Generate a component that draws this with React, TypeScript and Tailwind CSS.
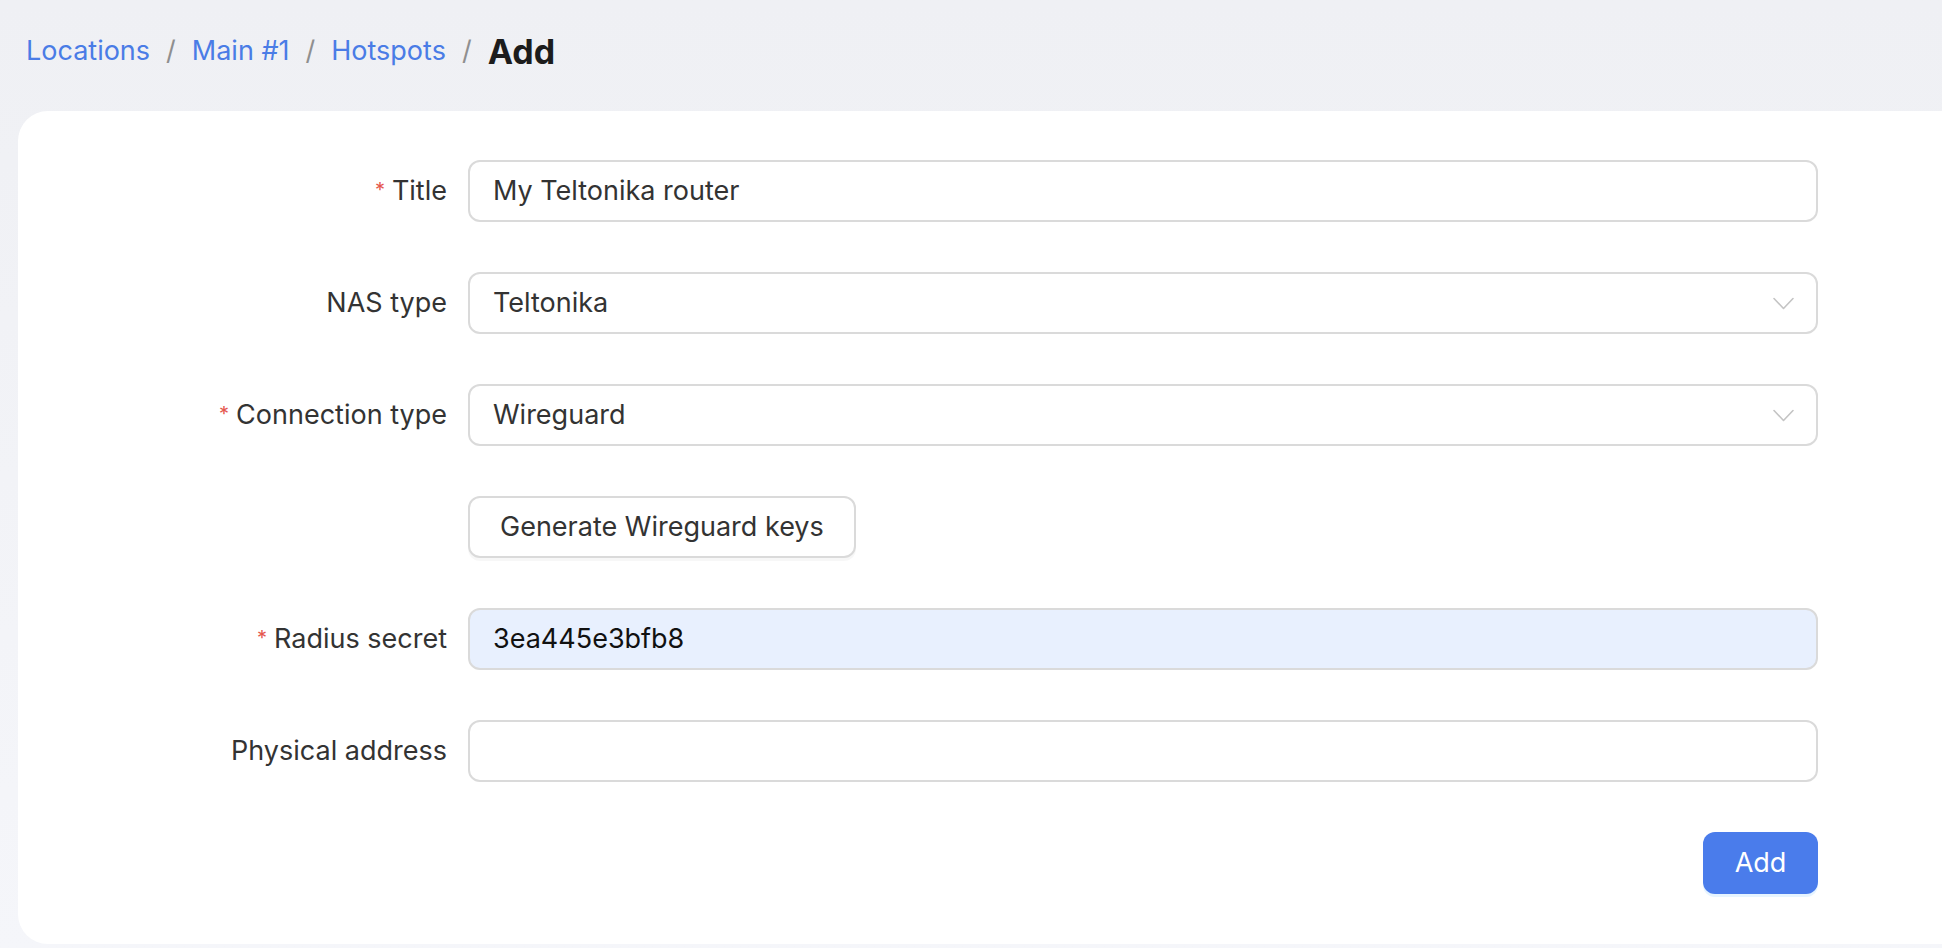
import { ReactNode } from "react";

const font = { fontFamily: "Inter, 'Noto Sans', sans-serif" };

const Chevron = () => (
  <svg width="21" height="13" viewBox="0 0 21 13" fill="none">
    <path d="M1 1.5 L10.5 11.5 L20 1.5" stroke="#c4c4c4" strokeWidth="1.6" strokeLinecap="round" strokeLinejoin="round" />
  </svg>
);

const Row = ({ label, required, children }: { label?: string; required?: boolean; children: ReactNode }) => (
  <div className="flex items-center">
    <div className="w-[450px] shrink-0 pr-[21px] text-right text-[27px] text-[#333333]">
      {required && <span className="relative top-[-3px] mr-[7px] text-[20px] text-[#e5564e]">*</span>}
      {label}
    </div>
    {children}
  </div>
);

const Input = ({ value, filled }: { value?: string; filled?: boolean }) => (
  <div
    className={`flex h-[62px] w-[1350px] items-center rounded-[12px] border-2 border-[#dadada] px-[23px] text-[27px] ${
      filled ? "bg-[#e8f0fe] text-[#111111]" : "bg-white text-[#333333]"
    }`}
  >
    {value}
  </div>
);

const Select = ({ value }: { value: string }) => (
  <div className="flex h-[62px] w-[1350px] items-center justify-between rounded-[12px] border-2 border-[#dadada] bg-white pl-[23px] pr-[22px] text-[27px] text-[#333333]">
    <span>{value}</span>
    <Chevron />
  </div>
);

const App = () => {
  return (
    <div className="flex min-h-screen flex-col overflow-hidden bg-gradient-to-b from-[#eff0f4] to-[#f5f6fa]" style={font}>
      <div className="flex h-[111px] items-center pb-[8px] pl-[26px] text-[27px]">
        <span className="text-[#4a7ce6]">Locations</span>
        <span className="mx-[16px] text-[#8f8f8f]">/</span>
        <span className="text-[#4a7ce6]">Main #1</span>
        <span className="mx-[16px] text-[#8f8f8f]">/</span>
        <span className="text-[#4a7ce6]">Hotspots</span>
        <span className="mx-[16px] text-[#8f8f8f]">/</span>
        <span className="text-[34px] font-bold text-[#1c1c1c]">Add</span>
      </div>
      <div className="mb-[5px] ml-[18px] flex flex-col gap-[50px] rounded-l-[30px] bg-white pb-[50px] pt-[49px]">
        <Row label="Title" required>
          <Input value="My Teltonika router" />
        </Row>
        <Row label="NAS type">
          <Select value="Teltonika" />
        </Row>
        <Row label="Connection type" required>
          <Select value="Wireguard" />
        </Row>
        <Row>
          <button className="h-[62px] rounded-[12px] border-2 border-[#dadada] bg-white px-[30px] text-[27px] text-[#333333] shadow-[0_3px_0_rgba(0,0,0,0.03)]">
            Generate Wireguard keys
          </button>
        </Row>
        <Row label="Radius secret" required>
          <Input value="3ea445e3bfb8" filled />
        </Row>
        <Row label="Physical address">
          <Input />
        </Row>
        <div className="flex w-[1800px] justify-end">
          <button className="h-[62px] w-[115px] rounded-[12px] bg-[#4a7ceb] text-[27px] text-white shadow-[0_3px_0_rgba(5,145,255,0.1)]">
            Add
          </button>
        </div>
      </div>
    </div>
  );
};

export default App;
